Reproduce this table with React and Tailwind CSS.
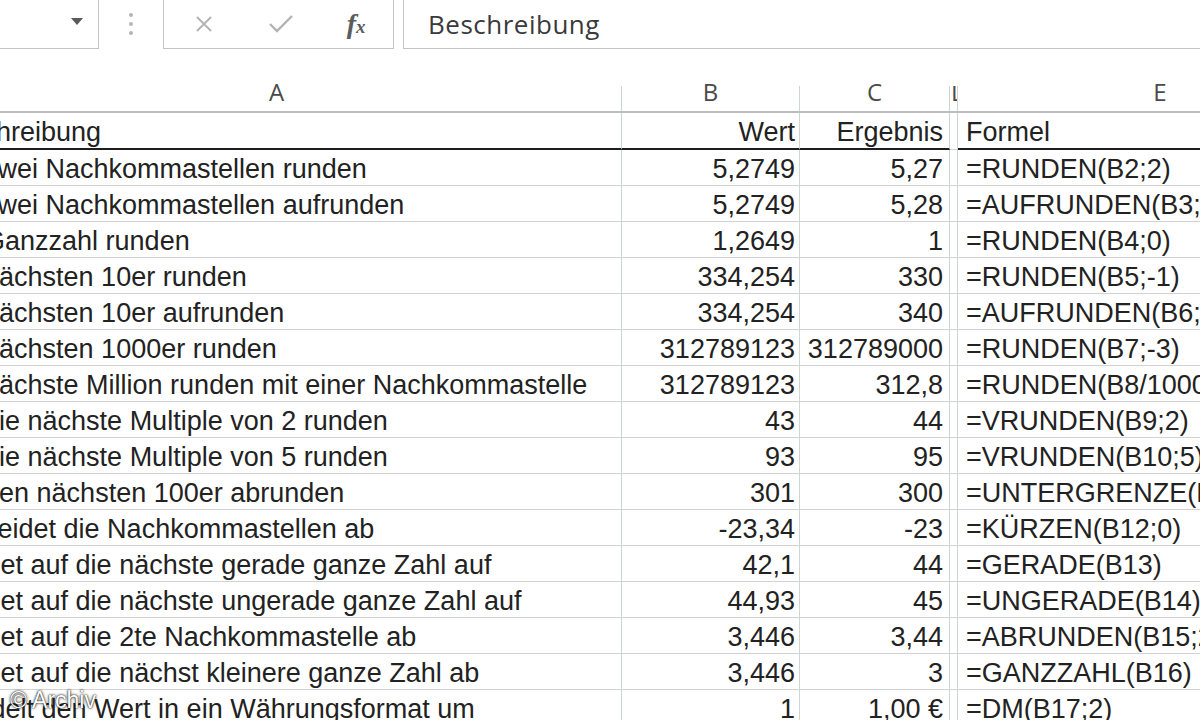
import React from 'react';

const rows = [
  ['Auf zwei Nachkommastellen runden', '5,2749', '5,27', '=RUNDEN(B2;2)'],
  ['Auf zwei Nachkommastellen aufrunden', '5,2749', '5,28', '=AUFRUNDEN(B3;2)'],
  ['Auf Ganzzahl runden', '1,2649', '1', '=RUNDEN(B4;0)'],
  ['Auf nächsten 10er runden', '334,254', '330', '=RUNDEN(B5;-1)'],
  ['Auf nächsten 10er aufrunden', '334,254', '340', '=AUFRUNDEN(B6;-1)'],
  ['Auf nächsten 1000er runden', '312789123', '312789000', '=RUNDEN(B7;-3)'],
  ['Auf nächste Million runden mit einer Nachkommastelle', '312789123', '312,8', '=RUNDEN(B8/1000000;1)'],
  ['Auf die nächste Multiple von 2 runden', '43', '44', '=VRUNDEN(B9;2)'],
  ['Auf die nächste Multiple von 5 runden', '93', '95', '=VRUNDEN(B10;5)'],
  ['Auf den nächsten 100er abrunden', '301', '300', '=UNTERGRENZE(B11;100)'],
  ['Schneidet die Nachkommastellen ab', '-23,34', '-23', '=KÜRZEN(B12;0)'],
  ['Rundet auf die nächste gerade ganze Zahl auf', '42,1', '44', '=GERADE(B13)'],
  ['Rundet auf die nächste ungerade ganze Zahl auf', '44,93', '45', '=UNGERADE(B14)'],
  ['Rundet auf die 2te Nachkommastelle ab', '3,446', '3,44', '=ABRUNDEN(B15;2)'],
  ['Rundet auf die nächst kleinere ganze Zahl ab', '3,446', '3', '=GANZZAHL(B16)'],
  ['Wandelt den Wert in ein Währungsformat um', '1', '1,00 €', '=DM(B17;2)'],
];

// Spalten A bis E, A beginnt links ausserhalb des Bildes
const cols = 'grid grid-cols-[690px_178px_150px_8px_404px]';
const vline = 'border-r border-[#cfd6d2]';

function Row({ cells, head }) {
  const bottom = head ? 'border-b-2 border-b-[#1e1e1e]' : 'border-b border-b-[#d2d2d2]';
  const h = head ? 'h-[37px]' : 'h-[36px]';
  return (
    <div className={`${cols} ${h} leading-none`}>
      <div className={`${vline} ${bottom} flex items-center pt-[3px] pl-[4px] whitespace-nowrap overflow-hidden`}>{cells[0]}</div>
      <div className={`${vline} ${bottom} flex items-center justify-end pt-[3px] pr-[4px] whitespace-nowrap`}>{cells[1]}</div>
      <div className={`${vline} ${bottom} flex items-center justify-end pt-[3px] pr-[6px] whitespace-nowrap`}>{cells[2]}</div>
      <div className={`${vline} border-b border-b-[#d2d2d2]`}></div>
      <div className={`${bottom} flex items-center pt-[3px] pl-[8px] whitespace-nowrap overflow-hidden`}>{cells[3]}</div>
    </div>
  );
}

export default function App() {
  return (
    <div className="w-[1200px] h-[720px] overflow-hidden bg-white relative">
      {/* Bearbeitungsleiste */}
      <div className="h-[50px] flex font-['Open_Sans',sans-serif]">
        <div className="w-[99px] h-[49px] border-r border-b border-[#c4c4c4] flex items-center justify-end pr-[15px] pb-[4px]">
          <svg width="12" height="8" viewBox="0 0 12 8">
            <path d="M0 0 H12 L6 7 Z" fill="#5a5a5a" />
          </svg>
        </div>
        <div className="w-[64px] h-[49px] flex flex-col items-center justify-center gap-[5px] pb-[2px]">
          <div className="w-[4px] h-[4px] rounded-full bg-[#b5b5b5]"></div>
          <div className="w-[4px] h-[4px] rounded-full bg-[#b5b5b5]"></div>
          <div className="w-[4px] h-[4px] rounded-full bg-[#b5b5b5]"></div>
        </div>
        <div className="w-[231px] h-[49px] border-l border-r border-b border-[#c4c4c4] flex items-center">
          <div className="w-[78px] flex justify-center pl-[2px]">
            <svg width="20" height="20" viewBox="0 0 20 20">
              <path d="M3 3 L17 17 M17 3 L3 17" stroke="#b3b3b3" strokeWidth="1.8" fill="none" />
            </svg>
          </div>
          <div className="w-[78px] flex justify-center">
            <svg width="26" height="22" viewBox="0 0 26 22">
              <path d="M2 11 L9 18 L24 3" stroke="#b3b3b3" strokeWidth="2.4" fill="none" />
            </svg>
          </div>
          <div className="w-[74px] flex justify-center">
            <span className="font-['Liberation_Serif',serif] italic font-bold text-[#5c5c5c] text-[28px] leading-none">
              f<span className="text-[19px]">x</span>
            </span>
          </div>
        </div>
        <div className="ml-[9px] flex-1 h-[49px] border-l border-b border-[#c4c4c4] flex items-center pl-[24px]">
          <span className="text-[26px] text-[#3a3a3a] tracking-[0.5px] leading-none">Beschreibung</span>
        </div>
      </div>

      {/* Spaltenköpfe */}
      <div className="ml-[-68px] h-[63px] border-b-2 border-[#bdbdbd] font-['Open_Sans',sans-serif] text-[24px] text-[#4a4a4a]">
        <div className={`${cols} h-full`}>
          {['A', 'B', 'C', 'D', 'E'].map((l, i) => (
            <div key={l} className="flex flex-col">
              <div className="h-[36px]"></div>
              <div className={`flex-1 ${i < 4 ? vline : ''} ${i === 3 ? 'overflow-hidden' : ''}`}>
                <div className={`-mt-[6px] h-[24px] leading-none ${i === 3 ? 'pl-[1px] text-left' : 'text-center'}`}>{l}</div>
              </div>
            </div>
          ))}
        </div>
      </div>

      {/* Zellen */}
      <div className="ml-[-68px] font-['Liberation_Sans',Arial,sans-serif] text-[27px] text-[#222]">
        <Row head cells={['Beschreibung', 'Wert', 'Ergebnis', 'Formel']} />
        {rows.map((r, i) => (
          <Row key={i} cells={r} />
        ))}
      </div>

      {/* Wasserzeichen */}
      <div className="absolute left-[10px] top-[683px] font-['Liberation_Sans',Arial,sans-serif] text-[23px] text-white [text-shadow:0_0_3px_rgba(0,0,0,0.95),0_0_1px_rgba(0,0,0,1)]">
        © Archiv
      </div>
    </div>
  );
}
